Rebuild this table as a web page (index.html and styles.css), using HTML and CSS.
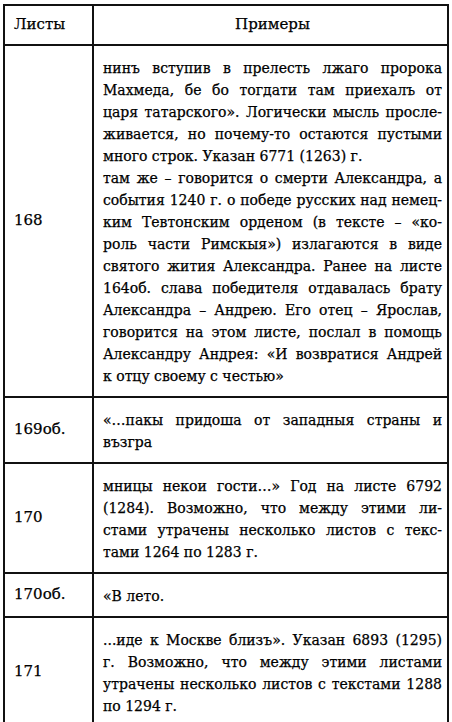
FILE: index.html
```html
<!DOCTYPE html>
<html lang="ru">
<head>
<meta charset="utf-8">
<link rel="stylesheet" href="styles.css">
</head>
<body>
<table class="tbl">
  <thead>
    <tr><th class="c1">Листы</th><th class="c2 hc">Примеры</th></tr>
  </thead>
  <tbody>
    <tr>
      <td class="c1">168</td>
      <td class="c2">
        <span class="ln">нинъ вступив в прелесть лжаго пророка</span>
        <span class="ln">Махмеда, бе бо тогдати там приехалъ от</span>
        <span class="ln">царя татарского». Логически мысль просле-</span>
        <span class="ln">живается, но почему-то остаются пустыми</span>
        <span class="ln last">много строк. Указан 6771 (1263) г.</span>
        <span class="ln">там же – говорится о смерти Александра, а</span>
        <span class="ln">события 1240 г. о победе русских над немец-</span>
        <span class="ln">ким Тевтонским орденом (в тексте – «ко-</span>
        <span class="ln">роль части Римскыя») излагаются в виде</span>
        <span class="ln">святого жития Александра. Ранее на листе</span>
        <span class="ln">164об. слава победителя отдавалась брату</span>
        <span class="ln">Александра – Андрею. Его отец – Ярослав,</span>
        <span class="ln">говорится на этом листе, послал в помощь</span>
        <span class="ln">Александру Андрея: «И возвратися Андрей</span>
        <span class="ln last">к отцу своему с честью»</span>
      </td>
    </tr>
    <tr>
      <td class="c1">169об.</td>
      <td class="c2">
        <span class="ln">«…пакы придоша от западныя страны и</span>
        <span class="ln last">възгра</span>
      </td>
    </tr>
    <tr>
      <td class="c1">170</td>
      <td class="c2">
        <span class="ln">мницы некои гости…» Год на листе 6792</span>
        <span class="ln">(1284). Возможно, что между этими ли-</span>
        <span class="ln">стами утрачены несколько листов с текс-</span>
        <span class="ln last">тами 1264 по 1283 г.</span>
      </td>
    </tr>
    <tr>
      <td class="c1">170об.</td>
      <td class="c2">
        <span class="ln last">«В лето.</span>
      </td>
    </tr>
    <tr>
      <td class="c1">171</td>
      <td class="c2">
        <span class="ln">...иде к Москве близъ». Указан 6893 (1295)</span>
        <span class="ln">г. Возможно, что между этими листами</span>
        <span class="ln">утрачены несколько листов с текстами 1288</span>
        <span class="ln last">по 1294 г.</span>
      </td>
    </tr>
  </tbody>
</table>
</body>
</html>
```
FILE: styles.css
```css
html, body {
  margin: 0;
  padding: 0;
  background: #fff;
}
body {
  padding: 4px 3px 0 3px;
  font-family: "DejaVu Serif", serif;
  font-size: 14px;
  line-height: 22px;
  color: #000;
  -webkit-text-stroke: 0.25px #000;
}
.tbl {
  width: 446px;
  border-collapse: collapse;
  table-layout: fixed;
}
.tbl th, .tbl td {
  border: 2px solid #111;
  vertical-align: middle;
  padding: 7px 5px 9px 9px;
  font-weight: normal;
}
.tbl th {
  font-size: 15px;
}
.tbl .c1 {
  width: 73px;
  text-align: left;
}
.tbl td.c1 {
  font-size: 15px;
}
.tbl .hc {
  text-align: center;
}
.tbl td.c2 {
  padding: 11px 5px 9px 9px;
}
.ln {
  display: block;
  text-align: justify;
  text-align-last: justify;
}
.ln.last {
  text-align-last: left;
}
```
